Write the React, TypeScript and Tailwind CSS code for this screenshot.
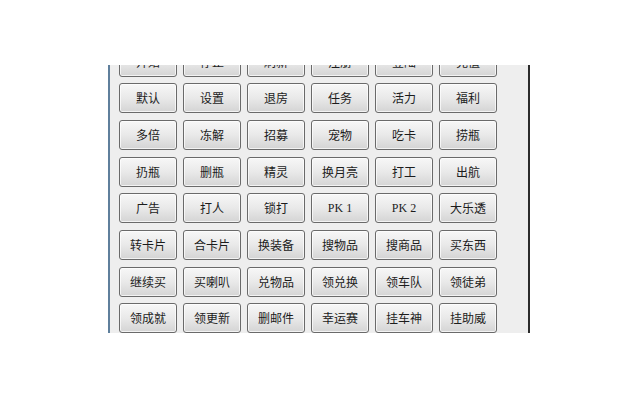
import React from "react";

const rows: string[][] = [
  ["开始", "停止", "刷新", "注册", "登陆", "充值"],
  ["默认", "设置", "退房", "任务", "活力", "福利"],
  ["多倍", "冻解", "招募", "宠物", "吃卡", "捞瓶"],
  ["扔瓶", "删瓶", "精灵", "换月亮", "打工", "出航"],
  ["广告", "打人", "锁打", "PK 1", "PK 2", "大乐透"],
  ["转卡片", "合卡片", "换装备", "搜物品", "搜商品", "买东西"],
  ["继续买", "买喇叭", "兑物品", "领兑换", "领车队", "领徒弟"],
  ["领成就", "领更新", "删邮件", "幸运赛", "挂车神", "挂助威"],
];

export default function App() {
  return (
    <div className="w-[640px] h-[400px] bg-white overflow-hidden">
      <div className="ml-[108px] mt-[65px] w-[422px] h-[268px] bg-[#eeeeee] border-l-2 border-l-[#5f7f9c] border-r-2 border-r-[#2b2b2b] overflow-hidden">
        <div className="-mt-[18.4px] pl-[9px] grid grid-cols-[repeat(6,58px)] gap-x-[6px] gap-y-[6.7px]">
          {rows.flat().map((t, i) => {
            const latin = /^PK/.test(t);
            return (
              <div
                key={i}
                className="h-[30px] rounded-[3px] border border-[#6a6a6a] bg-gradient-to-b from-[#f7f7f7] via-[#e9e9e9] to-[#d4d4d4] shadow-[inset_0_0_0_1px_rgba(255,255,255,0.7)] flex items-center justify-center text-[12px] text-[#1c1c1c] leading-none"
                style={{
                  fontFamily: latin
                    ? '"Liberation Serif", "Noto Sans CJK SC", serif'
                    : '"Noto Sans CJK SC", sans-serif',
                }}
              >
                {t}
              </div>
            );
          })}
        </div>
      </div>
    </div>
  );
}
